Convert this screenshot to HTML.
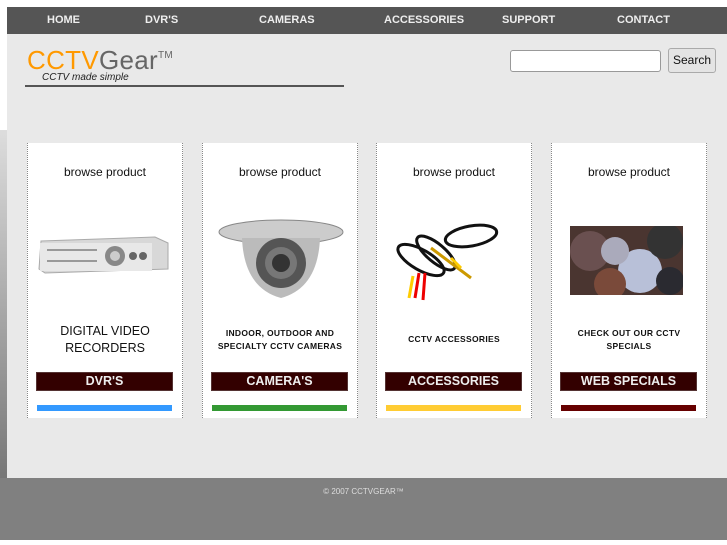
<!DOCTYPE html>
<html><head><style>
*{margin:0;padding:0;box-sizing:border-box}
body{width:727px;height:545px;background:#fff;position:relative;overflow:hidden;font-family:"Liberation Sans",sans-serif}
.abs{position:absolute}
#nav{left:7px;top:7px;width:720px;height:27px;background:#555}
#nav span{position:absolute;top:7px;color:#eee;font-weight:bold;font-size:11px}
#main{left:7px;top:34px;width:720px;height:444px;background:#e9e9e9}
#strip{left:0;top:130px;width:7px;height:348px;background:linear-gradient(#ddd,#777)}
#foot{left:0;top:478px;width:727px;height:62px;background:#808080;color:#ddd;font-size:8px;text-align:center;padding-top:9px}
.card{position:absolute;top:143px;width:156px;height:275px;background:#fff;border-left:1px dotted #888;border-right:1px dotted #888}
.bp{position:absolute;top:22px;width:100%;text-align:center;font-size:12px;color:#111}
.desc{position:absolute;width:100%;text-align:center;color:#111}
.btn{position:absolute;left:8px;top:229px;width:137px;height:19px;background:#300;border:1px solid #533;color:#eee;font-weight:bold;font-size:12.5px;text-align:center;line-height:17px}
.bar{position:absolute;left:9px;top:262px;width:135px;height:6px}
</style></head><body>
<div id="nav" class="abs">
<span style="left:40px">HOME</span><span style="left:138px">DVR'S</span><span style="left:252px">CAMERAS</span><span style="left:377px">ACCESSORIES</span><span style="left:495px">SUPPORT</span><span style="left:610px">CONTACT</span>
</div>
<div id="main" class="abs"></div>
<div id="strip" class="abs"></div>
<div class="abs" style="left:27px;top:45px;font-size:26px;letter-spacing:0.3px;color:#666"><span style="color:#f90">CCTV</span>Gear<sup style="font-size:10px;vertical-align:top;position:relative;top:5px">TM</sup></div>
<div class="abs" style="left:42px;top:72px;font-size:10px;font-style:italic;color:#222">CCTV made simple</div>
<div class="abs" style="left:25px;top:85px;width:319px;height:2px;background:#555"></div>
<div class="abs" style="left:510px;top:50px;width:151px;height:22px;background:#fff;border:1px solid #999;border-radius:3px"></div>
<div class="abs" style="left:668px;top:48px;width:48px;height:25px;background:#e4e4e4;border:1px solid #aaa;border-radius:3px;font-size:12px;text-align:center;line-height:23px;color:#111">Search</div>

<div class="card" style="left:27px"><div class="bp">browse product</div>
<svg class="abs" style="left:9px;top:90px" width="132" height="44"><polygon points="4,8 118,4 131,10 131,36 8,40 2,36" fill="#d8d8d8" stroke="#aaa"/><rect x="3" y="10" width="112" height="28" fill="#e8e8e8"/><circle cx="78" cy="23" r="10" fill="#888"/><circle cx="78" cy="23" r="5" fill="#ccc"/><circle cx="96" cy="23" r="4" fill="#666"/><circle cx="106" cy="23" r="4" fill="#666"/><g fill="#999"><rect x="10" y="16" width="50" height="2"/><rect x="10" y="27" width="50" height="2"/></g></svg>
<div class="desc" style="top:180px;font-size:12.5px;line-height:17px">DIGITAL VIDEO<br>RECORDERS</div>
<div class="btn">DVR'S</div><div class="bar" style="background:#39f"></div></div>

<div class="card" style="left:202px"><div class="bp">browse product</div>
<svg class="abs" style="left:15px;top:75px" width="126" height="82"><ellipse cx="63" cy="14" rx="62" ry="12" fill="#ccc" stroke="#888"/><path d="M24,20 Q26,70 63,80 Q100,70 102,20 Z" fill="#bbb"/><circle cx="63" cy="45" r="25" fill="#555"/><circle cx="63" cy="45" r="16" fill="#777"/><circle cx="63" cy="45" r="9" fill="#333"/></svg>
<div class="desc" style="top:184px;font-size:8.5px;font-weight:bold;line-height:13px;letter-spacing:0.3px">INDOOR, OUTDOOR AND<br>SPECIALTY CCTV CAMERAS</div>
<div class="btn">CAMERA'S</div><div class="bar" style="background:#393"></div></div>

<div class="card" style="left:376px"><div class="bp">browse product</div>
<svg class="abs" style="left:14px;top:75px" width="120" height="90" fill="none" stroke="#111" stroke-width="3"><ellipse cx="30" cy="42" rx="26" ry="10" transform="rotate(30 30 42)"/><ellipse cx="45" cy="35" rx="24" ry="9" transform="rotate(40 45 35)"/><ellipse cx="80" cy="18" rx="26" ry="10" transform="rotate(-10 80 18)"/><path d="M40,30 L80,60" stroke="#c90"/><path d="M28,55 L24,80 M34,55 L32,82" stroke="#e00"/><path d="M22,58 L18,80" stroke="#fc0"/><path d="M60,40 L70,50" stroke="#fc0"/></svg>
<div class="desc" style="top:191px;font-size:8.5px;font-weight:bold;letter-spacing:0.3px">CCTV ACCESSORIES</div>
<div class="btn">ACCESSORIES</div><div class="bar" style="background:#fc3"></div></div>

<div class="card" style="left:551px"><div class="bp">browse product</div>
<svg class="abs" style="left:18px;top:83px" width="113" height="69"><rect width="113" height="69" fill="#4a3530"/><circle cx="20" cy="25" r="20" fill="#6a5050"/><circle cx="70" cy="45" r="22" fill="#b8c0d8"/><circle cx="45" cy="25" r="14" fill="#aab"/><circle cx="95" cy="15" r="18" fill="#333"/><circle cx="40" cy="58" r="16" fill="#7a4a3a"/><circle cx="100" cy="55" r="14" fill="#2a2a30"/></svg>
<div class="desc" style="top:184px;font-size:8.5px;font-weight:bold;line-height:13px;letter-spacing:0.3px">CHECK OUT OUR CCTV<br>SPECIALS</div>
<div class="btn">WEB SPECIALS</div><div class="bar" style="background:#600"></div></div>

<div id="foot" class="abs">© 2007 CCTVGEAR™</div>
</body></html>
